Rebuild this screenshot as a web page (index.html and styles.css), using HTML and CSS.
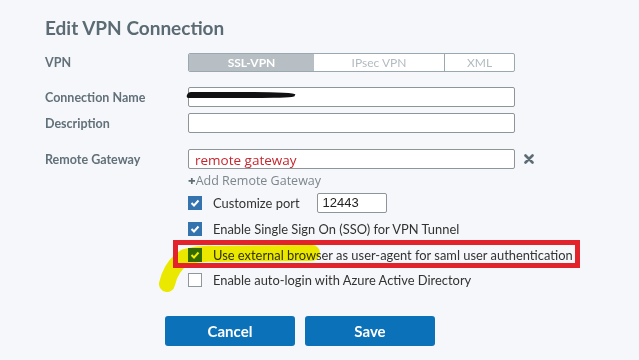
FILE: index.html
```html
<!DOCTYPE html>
<html>
<head>
<meta charset="utf-8">
<link rel="stylesheet" href="styles.css">
</head>
<body>
<div class="page">
  <h1 class="title">Edit VPN Connection</h1>

  <div class="row row-vpn">
    <div class="label">VPN</div>
    <div class="seg">
      <div class="seg-item seg-active">SSL-VPN</div>
      <div class="seg-item seg-ipsec">IPsec VPN</div>
      <div class="seg-item seg-xml">XML</div>
    </div>
  </div>

  <div class="row row-conn">
    <div class="label">Connection Name</div>
    <div class="input input-wide"><span class="scribble"></span></div>
  </div>

  <div class="row row-desc">
    <div class="label">Description</div>
    <div class="input input-wide"></div>
  </div>

  <div class="row row-remote">
    <div class="label">Remote Gateway</div>
    <div class="input input-wide input-remote">remote gateway</div>
    <svg class="xicon" width="10" height="10" viewBox="0 0 10 10"><path d="M1.5 1.5 L8.5 8.5 M8.5 1.5 L1.5 8.5" stroke="#5c6b74" stroke-width="2.6" stroke-linecap="round"/></svg>
  </div>

  <div class="row row-add">
    <div class="label"></div>
    <div class="add"><span class="plus">+</span>Add Remote Gateway</div>
  </div>

  <div class="row row-port">
    <div class="label"></div>
    <span class="cb cb-on"><svg width="14" height="14" viewBox="0 0 14 14"><path d="M3.5 7 L6 9.5 L10.5 4.5" fill="none" stroke="#fff" stroke-width="2"/></svg></span>
    <span class="cb-text">Customize port</span>
    <div class="input input-port">12443</div>
  </div>

  <div class="row row-sso">
    <div class="label"></div>
    <span class="cb cb-on"><svg width="14" height="14" viewBox="0 0 14 14"><path d="M3.5 7 L6 9.5 L10.5 4.5" fill="none" stroke="#fff" stroke-width="2"/></svg></span>
    <span class="cb-text">Enable Single Sign On (SSO) for VPN Tunnel</span>
  </div>

  <div class="row row-ext">
    <div class="label"></div>
    <span class="cb cb-on"><svg width="14" height="14" viewBox="0 0 14 14"><path d="M3.5 7 L6 9.5 L10.5 4.5" fill="none" stroke="#fff" stroke-width="2"/></svg></span>
    <span class="cb-text">Use external browser as user-agent for saml user authentication</span>
  </div>

  <div class="row row-auto">
    <div class="label"></div>
    <span class="cb cb-off"></span>
    <span class="cb-text">Enable auto-login with Azure Active Directory</span>
  </div>

  <div class="buttons">
    <button class="btn">Cancel</button>
    <button class="btn">Save</button>
  </div>

  <svg class="highlight" width="639" height="360" viewBox="0 0 639 360">
    <path d="M167 284 Q171 266 185 257 Q200 253 215 254 L312 253" fill="none" stroke="#f4f000" stroke-width="16" stroke-linecap="round" stroke-linejoin="round"/>
  </svg>
  <div class="redbox"></div>
</div>
</body>
</html>
```

FILE: styles.css
```css
html, body {
  margin: 0;
  padding: 0;
  background: #f6f7fa;
}
.page {
  position: relative;
  width: 639px;
  height: 360px;
  padding: 14px 0 0 45px;
  box-sizing: border-box;
  font-family: Lato, "Open Sans", sans-serif;
  overflow: hidden;
}
.title {
  margin: 0;
  font-size: 19px;
  line-height: 28px;
  font-weight: 700;
  color: #5b6b74;
}
.row {
  display: flex;
  align-items: center;
}
.label {
  width: 143px;
  flex: none;
  font-size: 12.5px;
  font-weight: 700;
  color: #617079;
}
.row-vpn { margin-top: 11px; height: 19px; }
.row-conn { margin-top: 15px; height: 20px; }
.row-desc { margin-top: 6px; height: 20px; }
.row-remote { margin-top: 16px; height: 20px; }
.row-add { margin-top: 4px; height: 14px; }
.row-port { margin-top: 6px; height: 20px; }
.row-sso { margin-top: 8px; height: 15px; }
.row-ext { margin-top: 11px; height: 15px; }
.row-auto { margin-top: 10px; height: 15px; }

.seg {
  display: flex;
  width: 327px;
  height: 19px;
  box-sizing: border-box;
  border: 1px solid #9aa8b1;
  border-radius: 2px;
  background: #fff;
  overflow: hidden;
}
.seg-item {
  display: flex;
  align-items: center;
  justify-content: center;
  font-size: 12px;
  color: #b3bbc0;
  box-sizing: border-box;
}
.seg-active {
  width: 125px;
  background: #b8bfc4;
  color: #fff;
  font-weight: 700;
}
.seg-ipsec {
  width: 131px;
  border-right: 1px solid #9aa8b1;
}
.seg-xml { flex: 1; }

.input {
  height: 20px;
  box-sizing: border-box;
  border: 1px solid #8d9599;
  border-radius: 2px;
  background: #fff;
}
.input-wide { width: 327px; position: relative; }
.scribble {
  position: absolute;
  left: -2px;
  top: 4px;
  width: 108px;
  height: 6px;
  background: #111;
  border-radius: 3px 40% 30% 3px;
  transform: skewX(-20deg);
}
.input-remote {
  font-family: "Open Sans", "Noto Sans", sans-serif;
  font-size: 13.5px;
  color: #c4262e;
  padding-left: 6px;
  padding-top: 1px;
  line-height: 18px;
}
.xicon { margin-left: 9px; }
.add {
  font-family: "Open Sans", sans-serif;
  font-size: 12.5px;
  color: #7b868d;
  line-height: 14px;
}
.plus {
  font-weight: 800;
  color: #606d75;
  font-size: 13px;
}
.cb {
  width: 14px;
  height: 14px;
  box-sizing: border-box;
  flex: none;
  display: inline-block;
}
.cb svg { display: block; }
.cb-on { background: #3473ae; }
.cb-off { background: #fff; border: 1px solid #8f979c; }
.cb-text {
  margin-left: 11px;
  font-size: 12.9px;
  color: #333;
  white-space: nowrap;
}
.input-port {
  width: 70px;
  margin-left: 17px;
  font-family: "Liberation Sans", Arial, sans-serif;
  font-size: 13px;
  color: #222;
  padding-left: 5px;
  line-height: 18px;
}
.buttons {
  display: flex;
  gap: 10px;
  margin-top: 29px;
  margin-left: 120px;
}
.btn {
  width: 130px;
  height: 30px;
  border: none;
  border-radius: 3px;
  background: #0b71b9;
  color: #fff;
  font-family: Lato, sans-serif;
  font-size: 15px;
  font-weight: 700;
  padding: 0;
}
.highlight {
  position: absolute;
  left: 0;
  top: 0;
  mix-blend-mode: multiply;
  pointer-events: none;
}
.redbox {
  position: absolute;
  left: 173px;
  top: 240px;
  width: 407px;
  height: 28px;
  box-sizing: border-box;
  border: 5px solid #e3232b;
}
```
